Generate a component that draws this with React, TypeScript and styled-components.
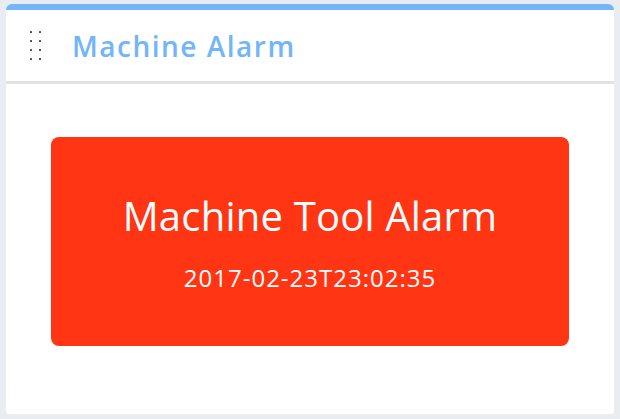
import styled, { createGlobalStyle } from 'styled-components';

const GlobalStyle = createGlobalStyle`
	html, body {
		margin: 0;
		padding: 0;
		background: #e9edf1;
	}
	body {
		font-family: 'Open Sans', 'Liberation Sans', sans-serif;
	}
`;

const Page = styled.div`
	box-sizing: border-box;
	width: 620px;
	height: 419px;
	padding: 4px 6px 11px 6px;
`;

const Card = styled.div`
	height: 100%;
	background: #fff;
	border-top: 6px solid #72b5f8;
	border-radius: 6px 6px 3px 3px;
	display: flex;
	flex-direction: column;
`;

const Header = styled.div`
	height: 74px;
	display: flex;
	align-items: center;
	padding-left: 24px;
	border-bottom: 3px solid #e2e2e2;
	box-sizing: border-box;
	flex: none;
`;

const Grip = styled.div`
	display: grid;
	grid-template-columns: repeat(2, 2px);
	grid-auto-rows: 2px;
	column-gap: 7px;
	row-gap: 7px;
	margin-right: 31px;
	span {
		width: 2px;
		height: 2px;
		border-radius: 0.5px;
		background: #4a4a4a;
	}
`;

const Title = styled.h2`
	margin: 0;
	font-size: 28px;
	font-weight: 600;
	letter-spacing: 1.5px;
	color: #72b5f8;
`;

const Body = styled.div`
	flex: 1;
	padding: 53px 45px 0 45px;
`;

const Alarm = styled.div<{ $tone: string }>`
	height: 209px;
	border-radius: 8px;
	background: ${p => p.$tone};
	color: #fff;
	display: flex;
	flex-direction: column;
	align-items: center;
	justify-content: center;
	gap: 30px;
	padding-top: 3px;
	box-sizing: border-box;
`;

const AlarmName = styled.div`
	font-size: 40px;
	line-height: 1;
	letter-spacing: 0.2px;
`;

const AlarmTime = styled.div`
	font-size: 24px;
	line-height: 1;
	letter-spacing: 1px;
`;

const App = () => {
	return <>
		<GlobalStyle />
		<Page>
			<Card>
				<Header>
					<Grip>
						{ Array.from({ length: 8 }).map((_, i) => <span key={i} />) }
					</Grip>
					<Title>Machine Alarm</Title>
				</Header>
				<Body>
					<Alarm $tone='#ff3514'>
						<AlarmName>Machine Tool Alarm</AlarmName>
						<AlarmTime>2017-02-23T23:02:35</AlarmTime>
					</Alarm>
				</Body>
			</Card>
		</Page>
	</>;
};

export default App;
